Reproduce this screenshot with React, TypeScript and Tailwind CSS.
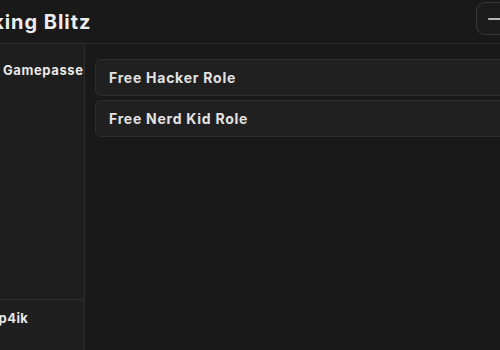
const roles = ["Free Hacker Role", "Free Nerd Kid Role"];

const App = () => {
  return (
    <div
      className="w-[500px] h-[350px] overflow-hidden bg-[#191919] text-[#e6e6e6] flex flex-col"
      style={{ fontFamily: "Inter, 'Noto Sans', sans-serif" }}
    >
      {/* title bar */}
      <div className="h-[44px] shrink-0 flex items-center border-b border-[#2c2c2c] w-[540px]">
        <span className="-ml-[49px] text-[20px] font-bold tracking-[0.95px] text-[#ececec]">Hacking Blitz</span>
        <div className="ml-auto self-start mt-[2px] h-[33px] w-[64px] rounded-[9px] border border-[#383838] bg-[#1c1c1c] flex items-center pl-[11px]">
          <div className="h-[2px] w-[14px] rounded bg-[#b5b5b5]" />
        </div>
      </div>

      <div className="flex flex-1 min-h-0">
        {/* sidebar */}
        <div className="w-[85px] shrink-0 border-r border-[#2c2c2c] bg-[#1e1e1e] flex flex-col overflow-hidden">
          <div className="flex-1 pt-[17px]">
            <div className="pl-[3px] text-[13px] font-bold tracking-[0.6px] whitespace-nowrap text-[#e8e8e8]">Gamepasses</div>
          </div>
          <div className="h-[51px] border-t border-[#2f2f2f] bg-[#1f1f1f] pt-[9px]">
            <div className="-ml-[15px] text-[13px] font-bold tracking-[0.4px] whitespace-nowrap text-[#e8e8e8]">@p4ik</div>
            <div className="-ml-[26px] text-[10px] text-[#3c3c3c] whitespace-nowrap">p4ik/</div>
          </div>
        </div>

        {/* content */}
        <div className="pl-[10px] pt-[15px] flex flex-col gap-[4px]">
          {roles.map((r) => (
            <div
              key={r}
              className="w-[440px] h-[37px] rounded-[6px] border border-[#2e2e2e] bg-[#202020] flex items-center pl-[13px]"
            >
              <span className="text-[14px] font-bold tracking-[0.75px] text-[#e2e2e2]">{r}</span>
            </div>
          ))}
        </div>
      </div>
    </div>
  );
};

export default App;
